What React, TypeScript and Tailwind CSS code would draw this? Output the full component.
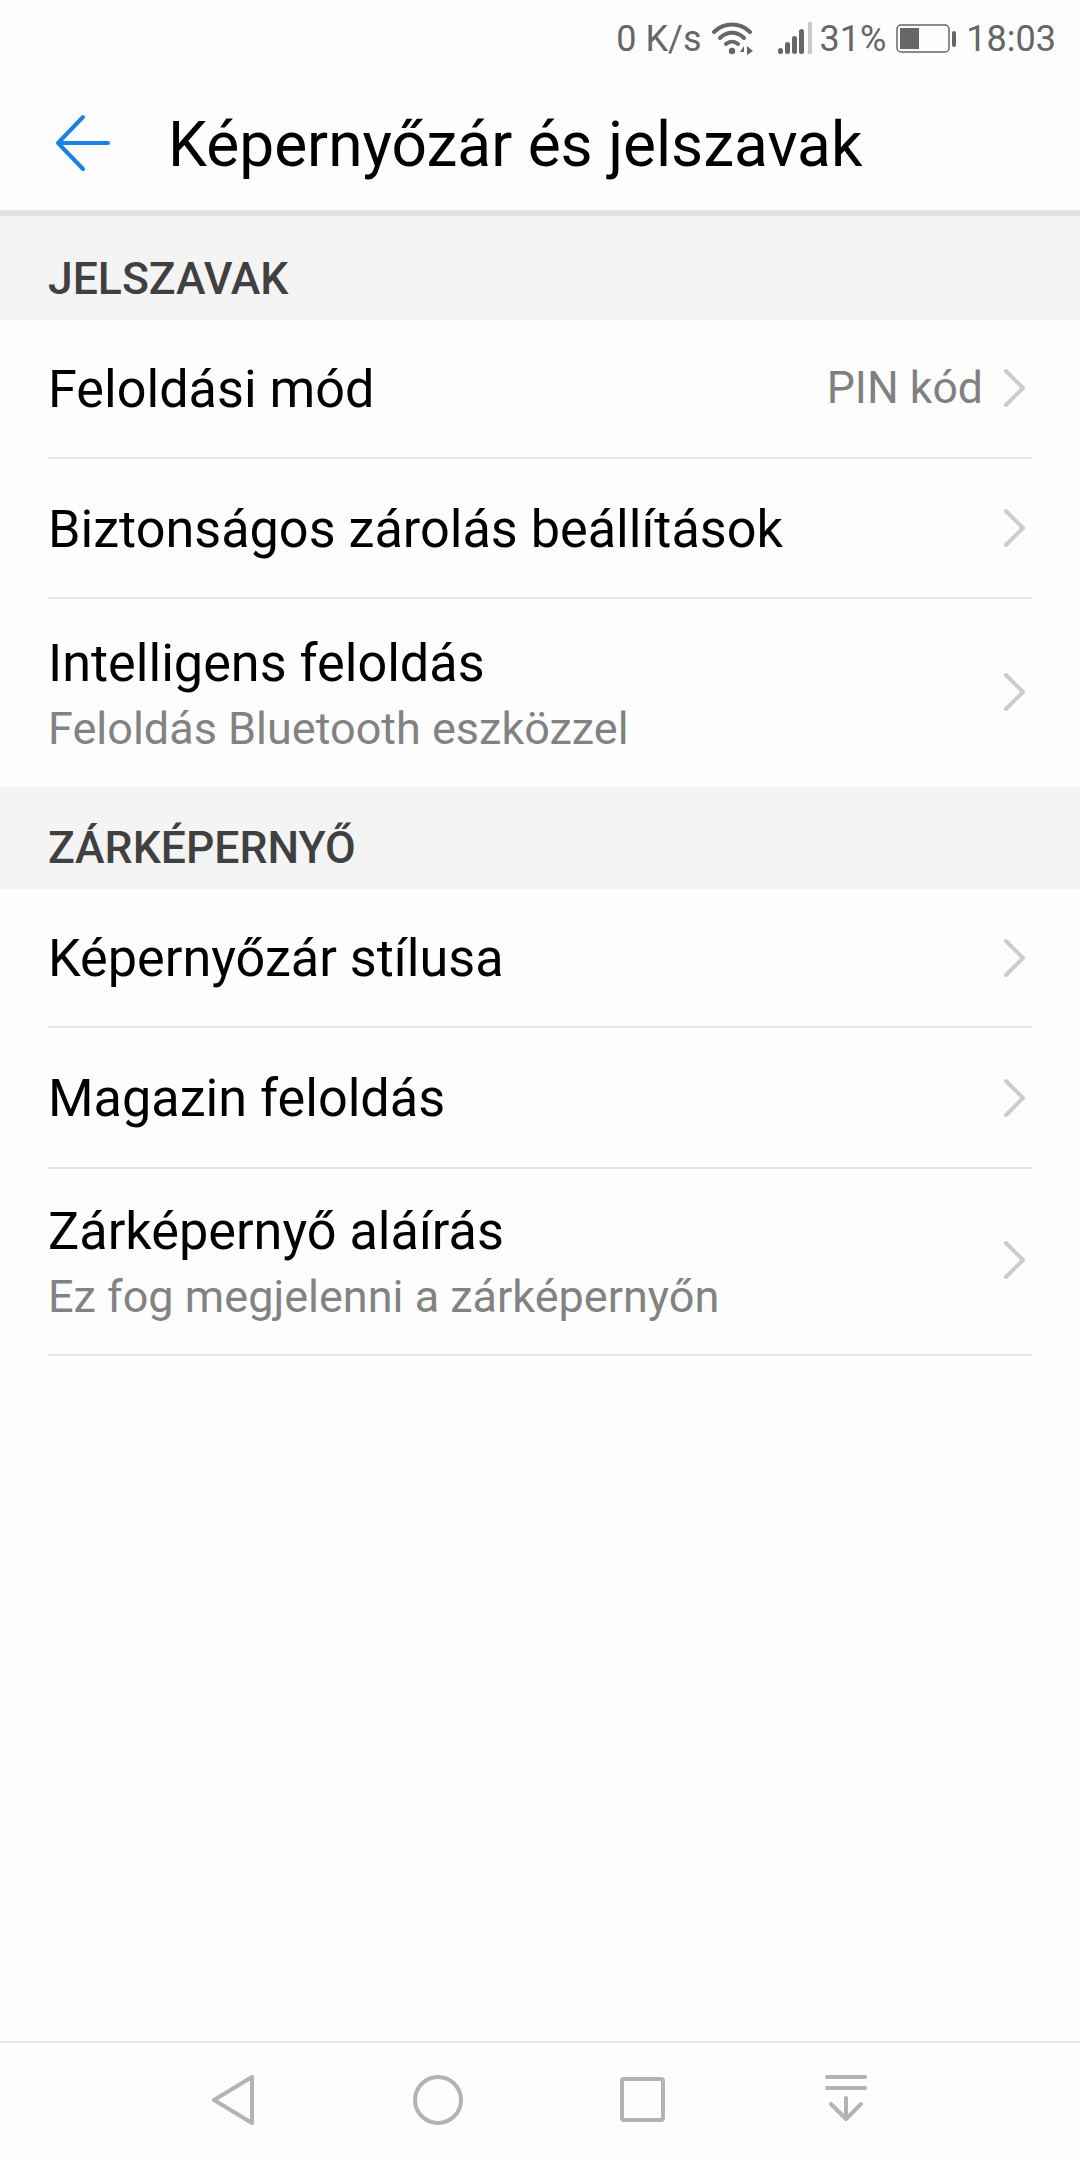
const font = "font-['Roboto',sans-serif]";

function Chevron() {
  return (
    <svg width="24" height="40" viewBox="0 0 24 40" fill="none" className="mr-[6px] shrink-0">
      <path d="M4 3 L21 20 L4 37" stroke="#cccccc" strokeWidth="4" strokeLinecap="round" strokeLinejoin="round" />
    </svg>
  );
}

function Row({ title, sub, value, h, last }: { title: string; sub?: string; value?: string; h: string; last?: boolean }) {
  return (
    <div className={`mx-12 flex items-center justify-between ${h} ${last === false ? "" : "border-b-2 border-[#e6e6e6]"}`}>
      <div className="flex flex-col pt-[3px]">
        <div className="text-[52.2px] leading-[68px] text-black">{title}</div>
        {sub && <div className="text-[45px] leading-[62px] text-[#828282]">{sub}</div>}
      </div>
      <div className={`flex items-center ${sub ? "mb-[3px]" : ""}`}>
        {value && <span className="mr-[19px] text-[44.6px] text-[#808080]">{value}</span>}
        <Chevron />
      </div>
    </div>
  );
}

function Section({ title, h }: { title: string; h: string }) {
  return (
    <div className={`flex items-end bg-[#f4f4f4] px-12 pb-[13px] ${h}`}>
      <span className="text-[44.5px] leading-[56px] font-medium text-[#404040]">{title}</span>
    </div>
  );
}

function StatusBar() {
  return (
    <div className="flex h-[75px] items-center justify-end pt-[3px] pr-[24px] text-[36px] text-[#666666]">
      <span>0 K/s</span>
      <svg width="44" height="36" viewBox="0 0 44 36" fill="none" className="ml-[9px]">
        <path d="M3 11 C13 1 29 1 39 11" stroke="#666666" strokeWidth="4" strokeLinecap="round" />
        <path d="M9 17 C16 10 26 10 33 17" stroke="#666666" strokeWidth="4" strokeLinecap="round" />
        <path d="M15 23 C18.5 20 23.5 20 27 23" stroke="#666666" strokeWidth="4" strokeLinecap="round" />
        <circle cx="21" cy="30" r="3.2" fill="#666666" />
        <path d="M33 25 L29 31 H33 Z M36 25 V34 L42 30 Z" fill="#666666" />
      </svg>
      <svg width="36" height="36" viewBox="0 0 36 36" className="ml-[23px]">
        <rect x="0" y="27" width="5" height="6" rx="2.5" fill="#666666" />
        <rect x="7" y="21" width="5" height="12" rx="2.5" fill="#666666" />
        <rect x="14" y="15" width="5" height="18" rx="2.5" fill="#666666" />
        <rect x="21" y="8" width="5" height="25" rx="2.5" fill="#666666" />
        <rect x="30" y="1" width="4" height="32" rx="1" fill="#c8c8c8" />
      </svg>
      <span className="ml-[6px]">31%</span>
      <svg width="62" height="32" viewBox="0 0 62 32" className="ml-[10px]">
        <rect x="1" y="2" width="52" height="27" rx="4" fill="none" stroke="#666666" strokeWidth="1.5" />
        <rect x="4" y="5" width="19" height="21" fill="#666666" />
        <rect x="56" y="8" width="4" height="16" rx="2" fill="#666666" />
      </svg>
      <span className="ml-[8px]">18:03</span>
    </div>
  );
}

function NavBar() {
  return (
    <div className="flex h-[119px] items-center border-t-2 border-[#e6e6e6] pb-[4px]">
      <div className="flex w-full">
        <div className="ml-[210px] flex w-[203px] items-center">
          <svg width="46" height="52" viewBox="0 0 46 52" fill="none">
            <path d="M42 3 L4 26 L42 49 Z" stroke="#b3b3b3" strokeWidth="4" strokeLinejoin="round" />
          </svg>
        </div>
        <div className="flex w-[207px] items-center">
          <svg width="50" height="50" viewBox="0 0 50 50" fill="none">
            <circle cx="25" cy="25" r="23" stroke="#b3b3b3" strokeWidth="4" />
          </svg>
        </div>
        <div className="flex w-[205px] items-center">
          <svg width="45" height="45" viewBox="0 0 45 45" fill="none">
            <rect x="2" y="2" width="41" height="41" rx="2" stroke="#b3b3b3" strokeWidth="4" />
          </svg>
        </div>
        <svg width="42" height="48" viewBox="0 0 42 48" fill="none">
          <path d="M2 3 H40 M2 14 H40 M21 24 V45 M6 30 L21 45 L36 30" stroke="#b3b3b3" strokeWidth="4" strokeLinecap="round" strokeLinejoin="round" />
        </svg>
      </div>
    </div>
  );
}

export default function App() {
  return (
    <div className={`${font} flex h-[2160px] w-[1080px] flex-col bg-[#fdfdfd]`}>
      <StatusBar />
      <div className="flex h-[141px] items-center border-b-[6px] border-[#e2e2e2]">
        <svg width="60" height="60" viewBox="0 0 60 60" fill="none" className="ml-[53px]">
          <path d="M30 4 L5 30 L30 56 M5 30 H55" stroke="#1a82e6" strokeWidth="4" strokeLinecap="round" strokeLinejoin="round" />
        </svg>
        <span className="mt-[5px] ml-[55px] text-[62.2px] leading-[70px] text-black">Képernyőzár és jelszavak</span>
      </div>
      <Section title="JELSZAVAK" h="h-[104px]" />
      <Row title="Feloldási mód" value="PIN kód" h="h-[139px]" />
      <Row title="Biztonságos zárolás beállítások" h="h-[140px]" />
      <Row title="Intelligens feloldás" sub="Feloldás Bluetooth eszközzel" h="h-[188px]" last={false} />
      <Section title="ZÁRKÉPERNYŐ" h="h-[102px]" />
      <Row title="Képernyőzár stílusa" h="h-[139px]" />
      <Row title="Magazin feloldás" h="h-[141px]" />
      <Row title="Zárképernyő aláírás" sub="Ez fog megjelenni a zárképernyőn" h="h-[187px]" />
      <div className="flex-1" />
      <NavBar />
    </div>
  );
}
